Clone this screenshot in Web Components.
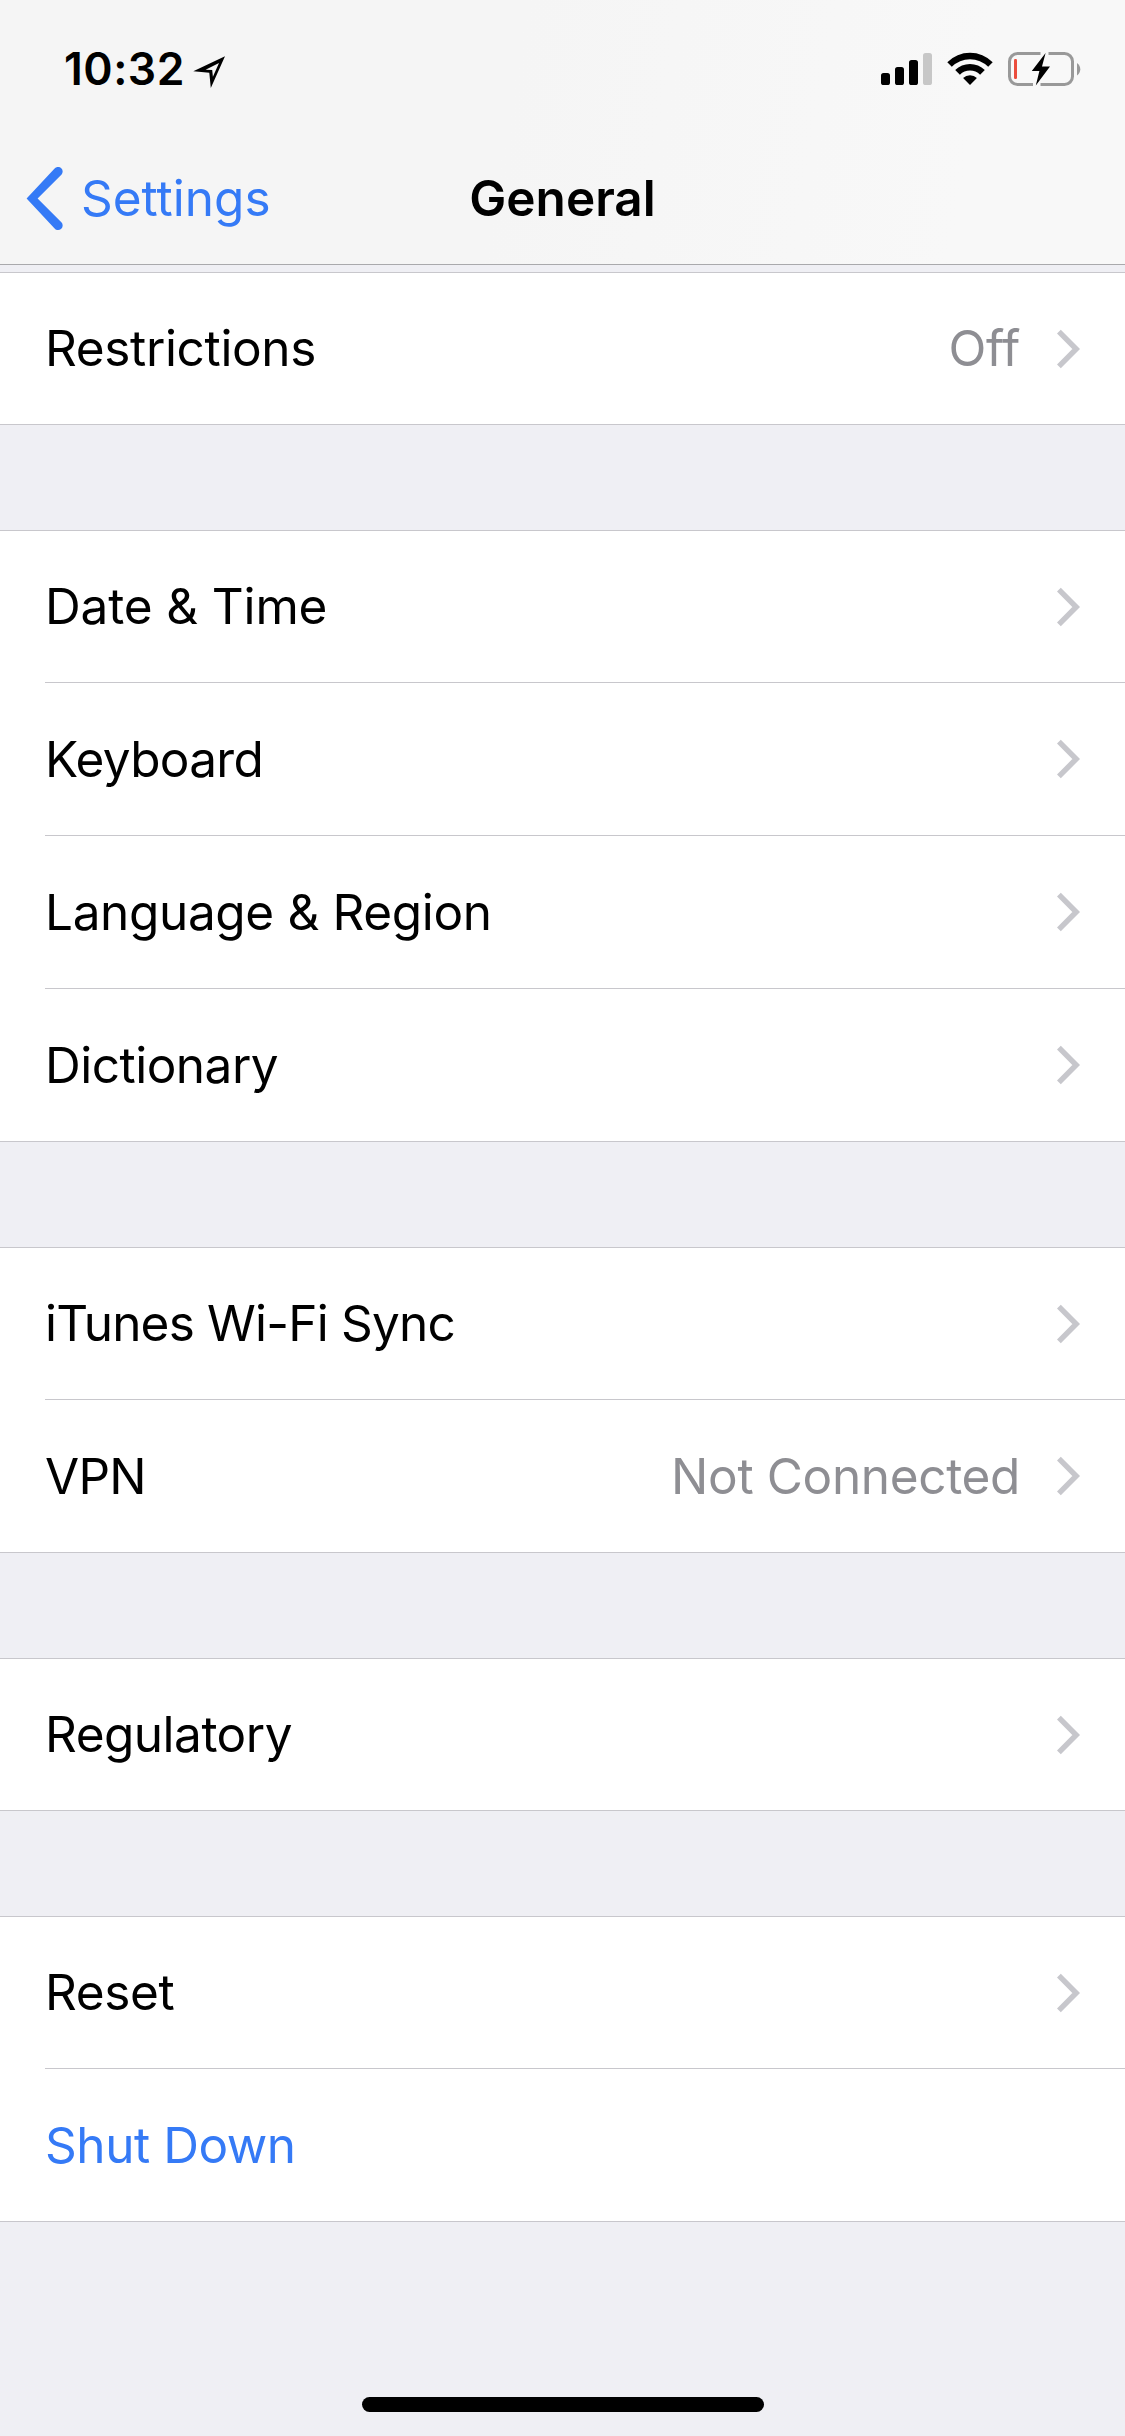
<!DOCTYPE html>
<html lang="en">
<head>
    <meta charset="UTF-8">
    <meta name="viewport" content="width=device-width, initial-scale=1.0">
    <title>General</title>
    <style>
        body {
            margin: 0;
            background: #efeff4;
            color: #000;
            font-family: Inter, "Liberation Sans", sans-serif;
            font-size: 49.5px;
            --tint: #357af6;
            --line: #c8c7cc;
        }
    </style>
</head>
<body>
<settings-screen>
    <status-bar slot="top" time="10:32"></status-bar>
    <nav-bar slot="top" back="Settings">General</nav-bar>
    <settings-group>
        <settings-row value="Off">Restrictions</settings-row>
    </settings-group>
    <settings-group>
        <settings-row tracking="-0.15">Date &amp; Time</settings-row>
        <settings-row tracking="-0.7">Keyboard</settings-row>
        <settings-row>Language &amp; Region</settings-row>
        <settings-row tracking="-0.5">Dictionary</settings-row>
    </settings-group>
    <settings-group>
        <settings-row tracking="-0.8">iTunes Wi-Fi Sync</settings-row>
        <settings-row tracking="-0.7" value="Not Connected">VPN</settings-row>
    </settings-group>
    <settings-group>
        <settings-row tracking="-0.5">Regulatory</settings-row>
    </settings-group>
    <settings-group>
        <settings-row>Reset</settings-row>
        <settings-row tracking="-0.45" action>Shut Down</settings-row>
    </settings-group>
    <home-indicator slot="bottom"></home-indicator>
</settings-screen>
<script>
    // small helper, every element here gets an open shadow root
    class BaseElement extends HTMLElement {
        render(html) {
            this.attachShadow({mode: 'open'}).innerHTML = html;
        }
    }

    class SettingsScreen extends BaseElement {
        constructor() {
            super();
            this.render(`
        <style>
          :host {
            display: flex;
            flex-direction: column;
            height: 2436px;
            overflow: hidden;
          }
          header {
            background: linear-gradient(100deg, #f5f5f5 45%, #f8f8f8 85%);
            border-bottom: 1px solid #a9a9ac;
          }
          main {
            flex: 1;
            display: flex;
            flex-direction: column;
            gap: 105px;
            padding-top: 7px;
          }
        </style>
        <header><slot name="top"></slot></header>
        <main><slot></slot></main>
        <slot name="bottom"></slot>
      `);
        }
    }

    class StatusBar extends BaseElement {
        connectedCallback() {
            this.render(`
        <style>
          :host {
            display: flex;
            align-items: flex-start;
            justify-content: space-between;
            box-sizing: border-box;
            height: 132px;
            padding: 42px 44px 0 64px;
          }
          .left, .right {
            display: flex;
          }
          .time {
            font-size: 44.5px;
            font-weight: 600;
            letter-spacing: 0.5px;
            line-height: 54px;
          }
          .arrow { margin: 14px 0 0 8px; }
          .right { margin-top: 10px; gap: 15px; }
          svg { display: block; }
        </style>
        <div class="left">
          <span class="time">${this.getAttribute('time')}</span>
          <svg class="arrow" width="33" height="33" viewBox="0 0 33 33">
            <path fill-rule="evenodd" d="M0.3 15.3 L32 0.3 L17.8 32 L16.3 16.7 Z M12.6 13.7 L19.2 13.9 L19.9 20.7 L26 7 Z"/>
          </svg>
        </div>
        <div class="right">
          <svg width="51" height="34" viewBox="0 0 51 34">
            <rect x="0" y="21" width="9" height="12" rx="2.6"/>
            <rect x="14" y="15" width="9" height="18" rx="2.6"/>
            <rect x="28" y="8" width="9" height="25" rx="2.6"/>
            <rect x="42" y="1" width="9" height="32" rx="2.6" fill="#c7c7c7"/>
          </svg>
          <svg width="46" height="34" viewBox="0 0 46 34">
            <path d="M0.3 10.2 A32 32 0 0 1 45.7 10.2 L41.2 14.8 A25.8 25.8 0 0 0 4.8 14.8 Z"/>
            <path d="M8.2 18 A21 21 0 0 1 37.8 18 L33.1 22.7 A14.4 14.4 0 0 0 12.9 22.7 Z"/>
            <path d="M16.1 26 A9.8 9.8 0 0 1 29.9 26 L23 33 Z"/>
          </svg>
          <svg width="73" height="35" viewBox="0 0 73 35">
            <path fill="none" stroke="#999" stroke-width="3" d="M32.5 1.5 H9.5 A8 8 0 0 0 1.5 9.5 V24.5 A8 8 0 0 0 9.5 32.5 H25 M32.5 32.5 H56.5 A8 8 0 0 0 64.5 24.5 V9.5 A8 8 0 0 0 56.5 1.5 H40.5"/>
            <path fill="#999" d="M69 11 A7.6 7.6 0 0 1 69 23.5 Z"/>
            <rect x="6" y="7" width="3" height="20" rx="1.2" fill="#eb4d3d"/>
            <path d="M37.6 1 L23.8 19 H31.4 L27.8 33.4 L42 14.4 H34 Z"/>
          </svg>
        </div>
      `);
        }
    }

    class NavBar extends BaseElement {
        connectedCallback() {
            this.render(`
        <style>
          :host {
            display: grid;
            grid-template-columns: 1fr auto 1fr;
            align-items: center;
            height: 132px;
            line-height: 60px;
          }
          .back {
            display: flex;
            align-items: center;
            gap: 18px;
            padding-left: 26px;
            color: var(--tint);
          }
          .back svg { margin-top: 2px; }
          .title { font-weight: 600; }
        </style>
        <div class="back">
          <svg width="37" height="64" viewBox="0 0 37 64">
            <path fill="currentColor" d="M0.6 31.4 L28.6 1.6 A4.4 4.4 0 0 1 35.6 7.4 L11.6 31.4 L35.6 55.6 A4.4 4.4 0 0 1 28.6 61.4 Z"/>
          </svg>
          <span>${this.getAttribute('back')}</span>
        </div>
        <span class="title"><slot></slot></span>
      `);
        }
    }

    class SettingsGroup extends BaseElement {
        constructor() {
            super();
            this.render(`
        <style>
          :host {
            display: block;
            background: #fff;
            border-top: 1px solid var(--line);
            border-bottom: 1px solid var(--line);
          }
          ::slotted(:not(:first-child)) {
            border-top: 1px solid var(--line);
          }
        </style>
        <slot></slot>
      `);
        }
    }

    class SettingsRow extends BaseElement {
        connectedCallback() {
            const value = this.getAttribute('value') || '';
            const tracking = this.getAttribute('tracking') || '-0.35';
            const chevron = this.hasAttribute('action') ? '' : `
          <svg width="24" height="40" viewBox="0 0 24 40">
            <path fill="none" stroke="#c7c7cc" stroke-width="5.4" d="M1.9 2.6 L19.2 20 L1.9 37.4"/>
          </svg>`;
            this.render(`
        <style>
          :host {
            display: flex;
            align-items: center;
            box-sizing: border-box;
            margin-left: 45px;
            padding-right: 44px;
            line-height: 60px;
          }
          :host(:first-child) { height: 151px; }
          :host(:not(:first-child)) { height: 153px; }
          :host(:first-child) span { margin-bottom: 1px; }
          :host([action]) { color: var(--tint); }
          .label { flex: 1; letter-spacing: ${tracking}px; }
          .value {
            color: #8e8e93;
            margin-right: 37px;
            letter-spacing: -0.35px;
          }
        </style>
        <span class="label"><slot></slot></span>
        <span class="value">${value}</span>
        ${chevron}
      `);
        }
    }

    class HomeIndicator extends BaseElement {
        constructor() {
            super();
            this.render(`
        <style>
          :host {
            display: block;
            width: 402px;
            height: 15px;
            margin: 0 auto 24px 362px;
            border-radius: 7.5px;
            background: #000;
          }
        </style>
      `);
        }
    }

    customElements.define('settings-screen', SettingsScreen);
    customElements.define('status-bar', StatusBar);
    customElements.define('nav-bar', NavBar);
    customElements.define('settings-group', SettingsGroup);
    customElements.define('settings-row', SettingsRow);
    customElements.define('home-indicator', HomeIndicator);
</script>
</body>
</html>
